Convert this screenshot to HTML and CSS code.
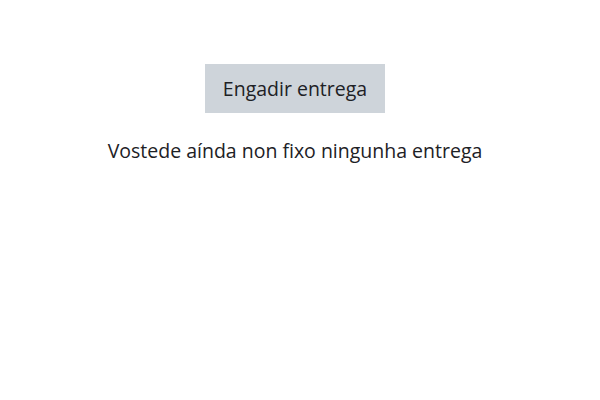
FILE: index.html
```html
<!DOCTYPE html>
<html lang="gl">
<head>
    <meta charset="UTF-8">
    <meta name="viewport" content="width=device-width, initial-scale=1.0">
    <title>Entrega</title>
    <link rel="stylesheet" href="styles.css">
</head>
<body>
    <div class="submission">
        <button class="addButton">Engadir entrega</button>
        <p class="status">Vostede aínda non fixo ningunha entrega</p>
    </div>
</body>
</html>
```

FILE: styles.css
```css
body {
    margin: 0;
    background-color: #ffffff;
    font-family: "Open Sans", "Noto Sans", sans-serif;
    color: #1d2125;
}
.submission {
    display: flex;
    flex-direction: column;
    align-items: center;
    padding: 64px 10px 0 0;
}
.addButton {
    height: 49px;
    padding: 0 17.5px;
    font-family: inherit;
    font-size: 19.5px;
    color: #1d2125;
    background-color: #ced4da;
    border: none;
    border-radius: 0;
}
.status {
    margin: 26px 0 0 0;
    font-size: 19.5px;
    line-height: 24px;
}
```
